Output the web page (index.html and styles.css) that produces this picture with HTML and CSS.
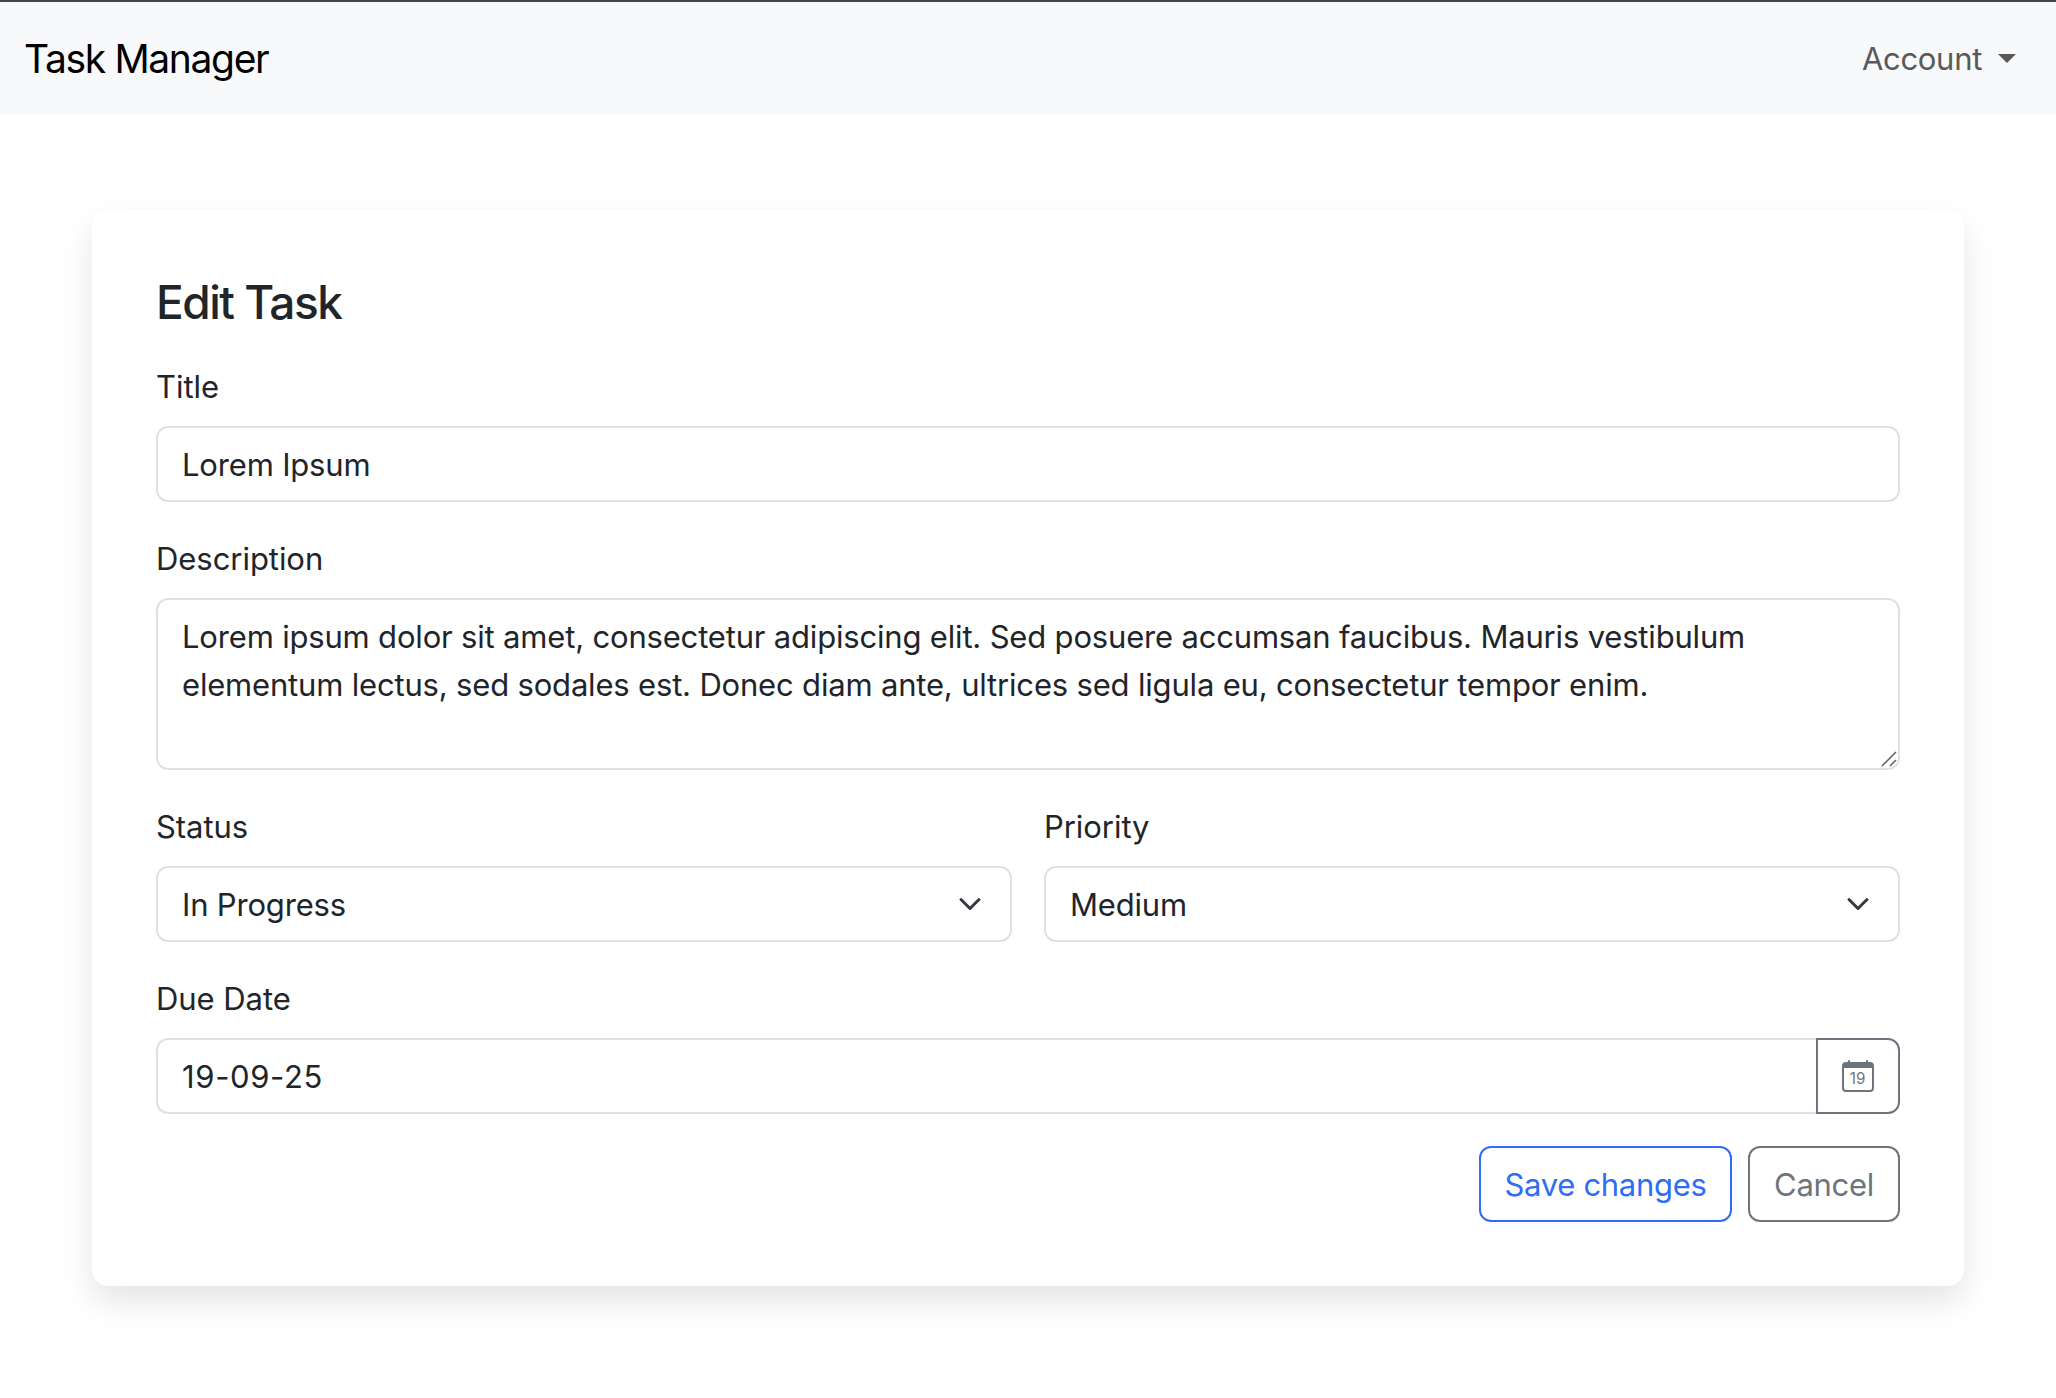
FILE: index.html
```html
<!DOCTYPE html>
<html lang="en">
<head>
<meta charset="utf-8">
<title>Task Manager</title>
<link rel="stylesheet" href="styles.css">
</head>
<body>
<nav class="navbar">
  <a class="brand">Task Manager</a>
  <a class="account"><span class="account-name">Account</span><span class="caret"></span></a>
</nav>
<main class="card">
  <h2 class="heading">Edit Task</h2>
  <form class="form">
    <div class="field">
      <label class="label" for="title">Title</label>
      <input class="control" id="title" type="text" value="Lorem Ipsum">
    </div>
    <div class="field">
      <label class="label" for="description">Description</label>
      <div class="area">
        <textarea class="control" id="description" rows="3">Lorem ipsum dolor sit amet, consectetur adipiscing elit. Sed posuere accumsan faucibus. Mauris vestibulum elementum lectus, sed sodales est. Donec diam ante, ultrices sed ligula eu, consectetur tempor enim.</textarea>
        <svg class="grip" viewBox="0 0 16 16"><path d="M1 15 15 1M9 15l6-6"/></svg>
      </div>
    </div>
    <div class="row">
      <div class="field">
        <label class="label" for="status">Status</label>
        <div class="select">
          <select class="control" id="status"><option>In Progress</option></select>
          <svg class="chevron" viewBox="0 0 16 16"><path d="m2 5 6 6 6-6"/></svg>
        </div>
      </div>
      <div class="field">
        <label class="label" for="priority">Priority</label>
        <div class="select">
          <select class="control" id="priority"><option>Medium</option></select>
          <svg class="chevron" viewBox="0 0 16 16"><path d="m2 5 6 6 6-6"/></svg>
        </div>
      </div>
    </div>
    <div class="field">
      <label class="label" for="due">Due Date</label>
      <div class="group">
        <input class="control date" id="due" type="text" value="19-09-25">
        <button class="btn picker" type="button">
          <svg class="calendar" viewBox="0 0 16 16"><path d="M3.5 0a.5.5 0 0 1 .5.5V1h8V.5a.5.5 0 0 1 1 0V1h1a2 2 0 0 1 2 2v11a2 2 0 0 1-2 2H2a2 2 0 0 1-2-2V3a2 2 0 0 1 2-2h1V.5a.5.5 0 0 1 .5-.5M1 4v10a1 1 0 0 0 1 1h12a1 1 0 0 0 1-1V4z"/><text x="7.8" y="11.8" text-anchor="middle">19</text></svg>
        </button>
      </div>
    </div>
    <div class="actions">
      <button class="btn save" type="button">Save changes</button>
      <button class="btn cancel" type="button">Cancel</button>
    </div>
  </form>
</main>
</body>
</html>
```
FILE: styles.css
```css
* { box-sizing: border-box; }
body {
  min-height: 1398px;
  margin: 0;
  background: #fff;
  color: #212529;
  font: 400 31px/48px Inter, "Liberation Sans", sans-serif;
}
.navbar {
  display: flex;
  align-items: center;
  justify-content: space-between;
  height: 114px;
  padding: 2px 40px 0 24px;
  background: #f8f9fb;
  border-top: 2px solid #454545;
}
.brand { color: #000; font-size: 39px; letter-spacing: -1.35px; }
.account { display: flex; align-items: center; gap: 16px; color: #595959; }
.account-name { letter-spacing: -0.3px; }
.caret {
  margin-top: -2px;
  border: 9px solid transparent;
  border-top-color: #595959;
  border-bottom: 0;
}
.card {
  margin: 96px 92px 0;
  height: 1076px;
  padding: 64px;
  border-radius: 16px;
  background: #fff;
  box-shadow: 0 16px 32px rgba(0, 0, 0, .105);
}
.heading { margin: 0 0 32px; font-size: 46px; font-weight: 500; line-height: 56px; letter-spacing: -1.5px; }
.form { display: flex; flex-direction: column; gap: 32px; }
.field { display: flex; flex-direction: column; gap: 16px; flex: 1; }
.row { display: flex; gap: 32px; }
.label { height: 48px; line-height: 50px; letter-spacing: -0.05px; }
.control {
  display: block;
  width: 100%;
  height: 76px;
  margin: 0;
  padding: 12px 24px;
  border: 2px solid #dee2e6;
  border-radius: 12px;
  background: #fff;
  color: #212529;
  font: inherit;
  letter-spacing: -0.18px;
  outline: 0;
  appearance: none;
}
.area, .select { position: relative; }
select.control { padding: 13px 24px 11px; }
textarea.control { height: 172px; padding-top: 13px; resize: none; overflow: hidden; }
.grip {
  position: absolute;
  right: 3px;
  bottom: 3px;
  width: 16px;
  height: 16px;
  fill: none;
  stroke: #666;
  stroke-width: 1.6;
}
.chevron {
  position: absolute;
  right: 30px;
  top: 26px;
  width: 24px;
  height: 24px;
  fill: none;
  stroke: #343a40;
  stroke-width: 2;
  stroke-linecap: round;
  stroke-linejoin: round;
}
.group { display: flex; }
.control.date { flex: 1; border-right: 0; border-radius: 12px 0 0 12px; letter-spacing: 0.65px; }
.btn {
  display: flex;
  align-items: center;
  justify-content: center;
  height: 76px;
  padding: 1px 0 0;
  border: 2px solid #6c757d;
  border-radius: 12px;
  background: #fff;
  color: #6c757d;
  font: inherit;
  letter-spacing: -0.3px;
}
.picker { width: 84px; padding: 0; border-radius: 0 12px 12px 0; }
.calendar { width: 32px; height: 32px; fill: currentColor; }
.calendar text { font-size: 7.6px; letter-spacing: 0; }
.actions { display: flex; justify-content: flex-end; gap: 16px; }
.save { width: 253px; border-color: #2f6df6; color: #2f6df6; }
.cancel { width: 152px; }
```
